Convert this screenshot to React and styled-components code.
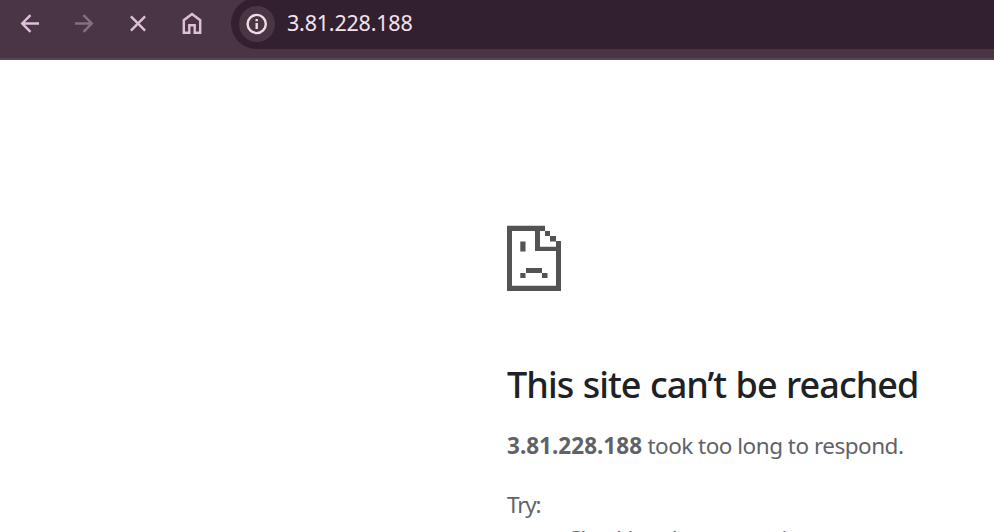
import React from "react";
import styled, { createGlobalStyle } from "styled-components";

const GlobalStyle = createGlobalStyle`
  * { box-sizing: border-box; }
  html, body { margin: 0; background: #fff; }
  body { overflow: hidden; font-family: "Segoe UI", "Noto Sans", "Open Sans", sans-serif; }
`;

const Window = styled.div`
  height: 532px;
  overflow: hidden;
  background: #fff;
`;

const Toolbar = styled.header`
  display: flex;
  align-items: flex-start;
  height: 60px;
  background: #4a3545;
  border-bottom: 2px solid #53464f;
  overflow: hidden;
`;

const NavButtons = styled.nav`
  display: flex;
  gap: 18px;
  padding: 5px 0 0 12px;
  width: 231px;
  flex: none;
`;

const NavButton = styled.button`
  display: grid;
  place-items: center;
  width: 36px;
  height: 36px;
  padding: 0;
  border: 0;
  background: none;
  color: ${(p) => (p.disabled ? "#846f7f" : "#dfc0d7")};
`;

const Icon = styled.svg`
  display: block;
  width: 36px;
  height: 36px;
  fill: none;
  stroke: currentColor;
  stroke-width: 2.4;
`;

const AddressBar = styled.div`
  display: flex;
  align-items: center;
  flex: 1;
  height: 51px;
  margin-top: -2px;
  padding-left: 8px;
  border-radius: 26px 0 0 26px;
  background: #33202f;
`;

const SiteInfo = styled.span`
  display: grid;
  place-items: center;
  width: 36px;
  height: 36px;
  border-radius: 50%;
  background: #4a3545;
  color: #f0dce9;
`;

const Address = styled.span`
  margin: -2px 0 0 12px;
  color: #f3e3ee;
  font-size: 21.5px;
  line-height: 30px;
  letter-spacing: -0.2px;
`;

const ErrorPage = styled.main`
  padding: 165px 0 0 507px;
  color: #5f6368;
  font-size: 22.5px;
  line-height: 36px;
  white-space: nowrap;
`;

const SadPage = styled.svg`
  display: block;
  width: 54px;
  height: 66px;
  fill: #535353;
`;

const Title = styled.h1`
  margin: 71px 0 0;
  color: #202124;
  font-size: 36px;
  font-weight: 500;
  line-height: 46px;
  letter-spacing: -0.95px;
  word-spacing: 1px;
`;

const Line = styled.p`
  margin: ${(p) => p.$top}px 0 0;
  letter-spacing: ${(p) => p.$tracking}px;
`;

const Host = styled.strong`
  letter-spacing: 0.02px;
`;

const Suggestions = styled.ul`
  margin: -2px 0 0;
  padding-left: 60px;
  letter-spacing: -0.65px;
`;

export default function App() {
  return (
    <Window>
      <GlobalStyle />
      <Toolbar>
        <NavButtons>
          <NavButton aria-label="Back">
            <Icon viewBox="0 0 36 36"><path d="M27 18.5H10.5M18.5 10.2l-8.3 8.3 8.3 8.3" /></Icon>
          </NavButton>
          <NavButton aria-label="Forward" disabled>
            <Icon viewBox="0 0 36 36"><path d="M9 18.5h16.5M17.5 10.2l8.3 8.3-8.3 8.3" /></Icon>
          </NavButton>
          <NavButton aria-label="Stop">
            <Icon viewBox="0 0 36 36"><path d="M10.9 11.4l14.2 14.2M25.1 11.4L10.9 25.6" /></Icon>
          </NavButton>
          <NavButton aria-label="Home">
            <Icon viewBox="0 0 36 36"><path d="M9.8 27.7V15.2L18 9l8.2 6.2v12.5h-5.5v-7.5h-5.4v7.5z" /></Icon>
          </NavButton>
        </NavButtons>
        <AddressBar>
          <SiteInfo>
            <Icon viewBox="0 0 36 36">
              <circle cx="17.7" cy="18" r="9.1" />
              <path d="M17.7 17v6M17.7 13v2.2" />
            </Icon>
          </SiteInfo>
          <Address>3.81.228.188</Address>
        </AddressBar>
      </Toolbar>
      <ErrorPage>
        <SadPage viewBox="0 0 54 66">
          <path fillRule="evenodd" d="M0 .7h38V6H33v15.7h16V16h5v50H0zM5 6v54.7h44V26H28V6z" />
          <path d="M38 6h5v5h-5zM43 11h6v5.5h-6zM13.3 16.5h5.2v10h-5.2zM19 43h16v5H19zM13.3 48h5.2v5h-5.2zM35 48h5.5v5H35z" />
        </SadPage>
        <Title>This site can’t be reached</Title>
        <Line $top={20} $tracking={-0.5}><Host>3.81.228.188</Host> took too long to respond.</Line>
        <Line $top={23} $tracking={-1.2}>Try:</Line>
        <Suggestions>
          <li>Checking the connection</li>
        </Suggestions>
      </ErrorPage>
    </Window>
  );
}
